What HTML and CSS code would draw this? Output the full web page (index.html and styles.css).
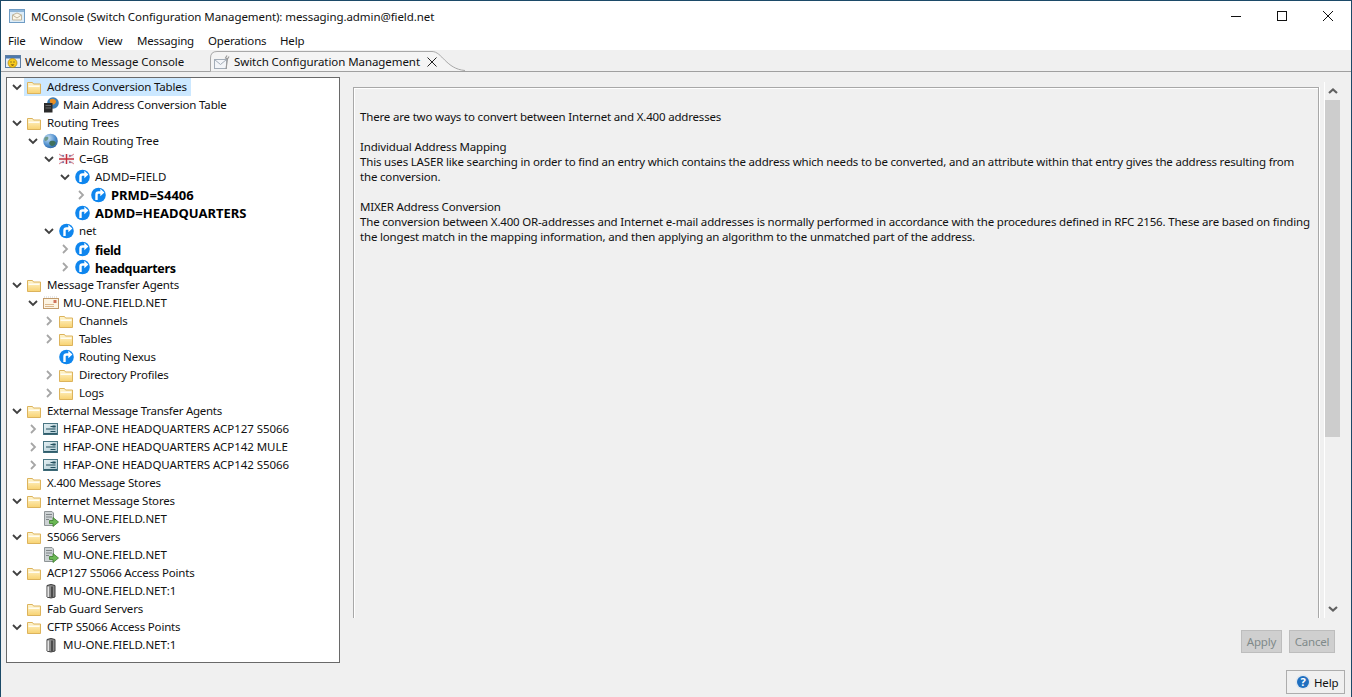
FILE: index.html
```html
<!DOCTYPE html>
<html lang="en">
<head>
<meta charset="utf-8">
<title>MConsole</title>
<link rel="stylesheet" href="styles.css">
</head>
<body>
<svg class="defs" width="0" height="0" aria-hidden="true">
  <defs>
    <linearGradient id="fg" x1="0" y1="0" x2="0" y2="1"><stop offset="0" stop-color="#fff6d2"/><stop offset="1" stop-color="#f8d270"/></linearGradient>
    <radialGradient id="gl" cx=".35" cy=".3" r=".8"><stop offset="0" stop-color="#c8e0f2"/><stop offset=".6" stop-color="#4f8fcf"/><stop offset="1" stop-color="#2a5f98"/></radialGradient>
    <linearGradient id="ex" x1="0" y1="0" x2="1" y2="1"><stop offset="0" stop-color="#e6f1f4"/><stop offset="1" stop-color="#a9c6cf"/></linearGradient>
    <symbol id="folder" viewBox="0 0 16 16">
      <path d="M.5 14.500V3.500h5l1 1.500h7v9.500z" fill="url(#fg)" stroke="#dcb35c"/>
      <path d="M1.500 6.500h11V8h-11z" fill="#fffdf2"/>
    </symbol>
    <symbol id="route" viewBox="0 0 16 16">
      <circle cx="7.500" cy="8" r="7.300" fill="#0f86ee"/>
      <path d="M5.500 13V7.500A2 2 0 0 1 7.500 5.500H10" fill="none" stroke="#fff" stroke-width="2.400"/>
      <path d="M9.300 1.800 13.400 5.500 9.300 9.200z" fill="#fff"/>
    </symbol>
    <symbol id="globe" viewBox="0 0 16 16">
      <circle cx="7.500" cy="8" r="7.300" fill="url(#gl)"/>
      <path d="M6.500 9c2-2 5-1 6 0s-1 4-3 4-4-2-3-4z" fill="#3f6f5c"/>
      <path d="M1.500 5c2-2 4-1 4 0S3.500 8 2.500 8 1 6 1.500 5z" fill="#6f9a8a"/>
    </symbol>
    <symbol id="flag" viewBox="0 0 16 12">
      <rect y="1" width="15" height="10" fill="#f1f1f6"/>
      <path d="M1 2h4v2.500zM14 2h-4v2.500zM1 10h4V7.500zM14 10h-4V7.500z" fill="#7484b8"/>
      <path d="M0 1 15 11M15 1 0 11" stroke="#e2838b"/>
      <path d="M7.500 1v10M0 6h15" stroke="#f6f6f6" stroke-width="3.500"/>
      <path d="M7.500 1v10M0 6h15" stroke="#c8303e" stroke-width="1.500"/>
    </symbol>
    <symbol id="mta" viewBox="0 0 16 14">
      <rect x=".5" y="2.500" width="15" height="10" fill="#fdf4e2" stroke="#c19a6b"/>
      <path d="M2 8.500h9M2 10.500h9" stroke="#dcb88f"/>
      <rect x="10.500" y="4" width="3" height="3" fill="#d0735a"/>
      <path d="M1 1h14" stroke="#cfcfcf" stroke-dasharray="1 1"/>
    </symbol>
    <symbol id="ext" viewBox="0 0 16 12">
      <rect x=".5" y=".5" width="14" height="11" fill="url(#ex)" stroke="#4a7683"/>
      <path d="M7.500 3.500h5M3 6h9.500M7.500 8.500h5" stroke="#24505f"/>
      <rect x="9.500" y="2.500" width="3" height="2" fill="#24505f"/>
      <rect x="1" y="10" width="13" height="1.500" fill="#2f5c6b"/>
    </symbol>
    <symbol id="store" viewBox="0 0 16 16">
      <path d="M1.500.5h7.500l1.500 1.500v12.500h-9z" fill="#cdd2d4" stroke="#8f9597"/>
      <path d="M3 3.500h6M3 6h6M3 8.500h3" stroke="#7f8587"/>
      <path d="M6.500 9.500h3.500V6.500l5.500 4.500-5.500 4.500V12.500H6.500z" fill="#6ab854" stroke="#3a7c2c" stroke-width=".8"/>
    </symbol>
    <symbol id="cyl" viewBox="0 0 12 16">
      <path d="M2 2.500Q6 .5 10 2.500V14Q6 16 2 14z" fill="#8a8a8a" stroke="#3e3e3e"/>
      <path d="M3.200 3.500V14" stroke="#e8e8e8" stroke-width="1.500"/>
      <path d="M7 3.500V14.500" stroke="#4c4c4c" stroke-width="2"/>
    </symbol>
    <symbol id="table" viewBox="0 0 16 16">
      <circle cx="10" cy="6" r="5.800" fill="#3c7fb8"/>
      <path d="M7 2.500c3-2 6 0 6 2s-3 4-4 3-3-3-2-5z" fill="#e88f24"/>
      <rect x="1" y="6" width="8.500" height="9.500" fill="#2b2b2b"/>
      <path d="M2.500 8.500h5.500M2.500 11h5.500" stroke="#6b6b6b"/>
    </symbol>
    <symbol id="down" viewBox="0 0 10 10"><path d="M1 3 5 7 9 3" fill="none" stroke="#404040" stroke-width="1.800"/></symbol>
    <symbol id="right" viewBox="0 0 10 10"><path d="M3 1 7 5 3 9" fill="none" stroke="#a6a6a6" stroke-width="1.800"/></symbol>
  </defs>
</svg>

<div class="window">
  <header class="titlebar">
    <svg class="app-icon" viewBox="0 0 16 16" width="16" height="16">
      <rect x=".5" y="1.500" width="15" height="13" fill="#dcecf8" stroke="#6f9cc4"/>
      <rect x="1" y="2" width="14" height="2" fill="#8fb6d8"/>
      <path d="M3.500 7 8 5l4.500 2v5h-9z" fill="#fbf6e8" stroke="#c0b59c"/>
      <path d="M3.500 7 8 10l4.500-3" fill="none" stroke="#c0b59c"/>
    </svg>
    <span class="title">MConsole (Switch Configuration Management): messaging.admin@field.net</span>
    <div class="controls">
      <svg class="ctl" viewBox="0 0 46 14" width="46" height="14"><path d="M18 7.500h10" stroke="#111"/></svg>
      <svg class="ctl" viewBox="0 0 46 14" width="46" height="14"><rect x="18.500" y="2.500" width="9" height="9" fill="none" stroke="#111"/></svg>
      <svg class="ctl" viewBox="0 0 46 14" width="46" height="14"><path d="M18 2l10 10M28 2 18 12" stroke="#111" fill="none"/></svg>
    </div>
  </header>

  <nav class="menubar">
    <span>File</span><span>Window</span><span>View</span><span>Messaging</span><span>Operations</span><span>Help</span>
  </nav>

  <div class="tabbar">
    <div class="tab tab-idle">
      <svg class="tab-icon" viewBox="0 0 16 14" width="16" height="14">
        <rect x=".5" y=".5" width="15" height="12" fill="#e6eff8" stroke="#5d7ea3"/>
        <rect x="1" y="1" width="14" height="2.500" fill="#4d79ad"/>
        <circle cx="7.500" cy="8" r="4.500" fill="#f8cc1e" stroke="#a97f10" stroke-width=".7"/>
        <path d="M5.500 7h1M8.500 7h1" stroke="#333"/>
        <path d="M5.500 9.500c1 1.500 3 1.500 4 0z" fill="#5a3a10"/>
      </svg>
      <span>Welcome to Message Console</span>
    </div>
    <div class="tab tab-active">
      <svg class="tab-shape" viewBox="0 0 256 22" width="256" height="22" preserveAspectRatio="none">
        <path d="M.5 21.500V8Q.5 1.500 7 1.500H222C232 1.500 236 19 255 20.500" fill="#f4f4f4" stroke="#a8a8a8"/>
      </svg>
      <svg class="tab-icon" viewBox="0 0 16 16" width="16" height="16">
        <rect x=".5" y="5.500" width="12" height="9" fill="#f3f5f8" stroke="#a3adb8"/>
        <path d="M.5 5.500 6.500 10.500 12.500 5.500" fill="none" stroke="#a3adb8"/>
        <path d="M13 1.500 11.500 4l2 1 1.500-2.500M13.500 5 12 15" fill="none" stroke="#9a9a9a" stroke-width="1.200"/>
      </svg>
      <span>Switch Configuration Management</span>
      <svg class="tab-close" viewBox="0 0 10 10" width="10" height="10"><path d="M.5.500l9 9M9.500.500l-9 9" stroke="#222" fill="none"/></svg>
    </div>
  </div>

  <main class="content">
    <section class="tree">
      <div class="row l0 selected"><svg class="chev"><use href="#down"/></svg><svg class="ico"><use href="#folder"/></svg><span class="lbl">Address Conversion Tables</span></div>
      <div class="row l1"><i class="nochev"></i><svg class="ico"><use href="#table"/></svg><span class="lbl">Main Address Conversion Table</span></div>
      <div class="row l0"><svg class="chev"><use href="#down"/></svg><svg class="ico"><use href="#folder"/></svg><span class="lbl">Routing Trees</span></div>
      <div class="row l1"><svg class="chev"><use href="#down"/></svg><svg class="ico"><use href="#globe"/></svg><span class="lbl">Main Routing Tree</span></div>
      <div class="row l2"><svg class="chev"><use href="#down"/></svg><svg class="ico"><use href="#flag"/></svg><span class="lbl caps">C=GB</span></div>
      <div class="row l3"><svg class="chev"><use href="#down"/></svg><svg class="ico"><use href="#route"/></svg><span class="lbl caps">ADMD=FIELD</span></div>
      <div class="row l4"><svg class="chev"><use href="#right"/></svg><svg class="ico"><use href="#route"/></svg><span class="strong strong-caps">PRMD=S4406</span></div>
      <div class="row l3"><i class="nochev"></i><svg class="ico"><use href="#route"/></svg><span class="strong strong-caps">ADMD=HEADQUARTERS</span></div>
      <div class="row l2"><svg class="chev"><use href="#down"/></svg><svg class="ico"><use href="#route"/></svg><span class="lbl">net</span></div>
      <div class="row l3"><svg class="chev"><use href="#right"/></svg><svg class="ico"><use href="#route"/></svg><span class="strong strong-low">field</span></div>
      <div class="row l3"><svg class="chev"><use href="#right"/></svg><svg class="ico"><use href="#route"/></svg><span class="strong strong-low">headquarters</span></div>
      <div class="row l0"><svg class="chev"><use href="#down"/></svg><svg class="ico"><use href="#folder"/></svg><span class="lbl">Message Transfer Agents</span></div>
      <div class="row l1"><svg class="chev"><use href="#down"/></svg><svg class="ico"><use href="#mta"/></svg><span class="lbl caps">MU-ONE.FIELD.NET</span></div>
      <div class="row l2"><svg class="chev"><use href="#right"/></svg><svg class="ico"><use href="#folder"/></svg><span class="lbl">Channels</span></div>
      <div class="row l2"><svg class="chev"><use href="#right"/></svg><svg class="ico"><use href="#folder"/></svg><span class="lbl">Tables</span></div>
      <div class="row l2"><i class="nochev"></i><svg class="ico"><use href="#route"/></svg><span class="lbl">Routing Nexus</span></div>
      <div class="row l2"><svg class="chev"><use href="#right"/></svg><svg class="ico"><use href="#folder"/></svg><span class="lbl">Directory Profiles</span></div>
      <div class="row l2"><svg class="chev"><use href="#right"/></svg><svg class="ico"><use href="#folder"/></svg><span class="lbl">Logs</span></div>
      <div class="row l0"><svg class="chev"><use href="#down"/></svg><svg class="ico"><use href="#folder"/></svg><span class="lbl tight">External Message Transfer Agents</span></div>
      <div class="row l1"><svg class="chev"><use href="#right"/></svg><svg class="ico"><use href="#ext"/></svg><span class="lbl caps">HFAP-ONE HEADQUARTERS ACP127 S5066</span></div>
      <div class="row l1"><svg class="chev"><use href="#right"/></svg><svg class="ico"><use href="#ext"/></svg><span class="lbl caps">HFAP-ONE HEADQUARTERS ACP142 MULE</span></div>
      <div class="row l1"><svg class="chev"><use href="#right"/></svg><svg class="ico"><use href="#ext"/></svg><span class="lbl caps">HFAP-ONE HEADQUARTERS ACP142 S5066</span></div>
      <div class="row l0"><i class="nochev"></i><svg class="ico"><use href="#folder"/></svg><span class="lbl">X.400 Message Stores</span></div>
      <div class="row l0"><svg class="chev"><use href="#down"/></svg><svg class="ico"><use href="#folder"/></svg><span class="lbl">Internet Message Stores</span></div>
      <div class="row l1"><i class="nochev"></i><svg class="ico"><use href="#store"/></svg><span class="lbl caps">MU-ONE.FIELD.NET</span></div>
      <div class="row l0"><svg class="chev"><use href="#down"/></svg><svg class="ico"><use href="#folder"/></svg><span class="lbl">S5066 Servers</span></div>
      <div class="row l1"><i class="nochev"></i><svg class="ico"><use href="#store"/></svg><span class="lbl caps">MU-ONE.FIELD.NET</span></div>
      <div class="row l0"><svg class="chev"><use href="#down"/></svg><svg class="ico"><use href="#folder"/></svg><span class="lbl">ACP127 S5066 Access Points</span></div>
      <div class="row l1"><i class="nochev"></i><svg class="ico"><use href="#cyl"/></svg><span class="lbl caps">MU-ONE.FIELD.NET:1</span></div>
      <div class="row l0"><i class="nochev"></i><svg class="ico"><use href="#folder"/></svg><span class="lbl">Fab Guard Servers</span></div>
      <div class="row l0"><svg class="chev"><use href="#down"/></svg><svg class="ico"><use href="#folder"/></svg><span class="lbl">CFTP S5066 Access Points</span></div>
      <div class="row l1"><i class="nochev"></i><svg class="ico"><use href="#cyl"/></svg><span class="lbl caps">MU-ONE.FIELD.NET:1</span></div>
    </section>

    <section class="right">
      <div class="pane-wrap">
        <article class="pane">
          <p>There are two ways to convert between Internet and X.400 addresses</p>
          <p>Individual Address Mapping<br>This uses LASER like searching in order to find an entry which contains the address which needs to be converted, and an attribute within that entry gives the address resulting from<br>the conversion.</p>
          <p>MIXER Address Conversion<br>The conversion between X.400 OR-addresses and Internet e-mail addresses is normally performed in accordance with the procedures defined in RFC 2156. These are based on finding<br>the longest match in the mapping information, and then applying an algorithm to the unmatched part of the address.</p>
        </article>
        <div class="scrollbar">
          <svg class="sb-arrow" viewBox="0 0 10 6" width="10" height="6"><path d="M1 5 5 1.500 9 5" fill="none" stroke="#606060" stroke-width="2.200"/></svg>
          <div class="track"><div class="thumb"></div></div>
          <svg class="sb-arrow" viewBox="0 0 10 6" width="10" height="6"><path d="M1 1 5 4.500 9 1" fill="none" stroke="#606060" stroke-width="2.200"/></svg>
        </div>
      </div>
      <div class="actions">
        <button class="btn btn-apply" disabled>Apply</button>
        <button class="btn btn-cancel" disabled>Cancel</button>
      </div>
    </section>
  </main>

  <footer class="footer">
    <button class="help">
      <svg viewBox="0 0 16 16" width="16" height="16">
        <circle cx="8" cy="8" r="7.500" fill="#dfe7ef"/>
        <circle cx="8" cy="8" r="6" fill="#1f6fc0"/>
        <text x="8" y="12" class="q">?</text>
      </svg>
      <span>Help</span>
    </button>
  </footer>
</div>
</body>
</html>
```
FILE: styles.css
```css
* { box-sizing: border-box; }
html, body { margin: 0; height: 100%; }
body {
  width: 1352px;
  height: 697px;
  overflow: hidden;
  background: #f0f0f0;
  color: #111;
  font-family: "Noto Sans", "Open Sans", sans-serif;
  font-size: 11.5px;
  letter-spacing: -0.18px;
}
.defs { position: absolute; }
.window {
  height: 697px;
  display: flex;
  flex-direction: column;
  border-top: 1px solid #1c4a68;
  border-left: 1px solid #1c4a68;
  border-right: 1px solid #1c4a68;
}
.titlebar {
  height: 30px;
  flex: none;
  display: flex;
  align-items: center;
  background: #fff;
  padding-left: 8px;
}
.app-icon { flex: none; }
.title { margin-left: 6px; flex: 1; letter-spacing: -0.08px; }
.controls { display: flex; }
.ctl { display: block; }
.menubar {
  height: 19px;
  flex: none;
  display: grid;
  grid-template-columns: 32px 58px 39px 71px 72px auto;
  align-items: center;
  background: #fff;
  padding-left: 7px;
}
.tabbar {
  height: 22px;
  flex: none;
  display: flex;
  border-bottom: 1px solid #a0a0a0;
}
.tab { display: flex; align-items: center; height: 21px; letter-spacing: -0.07px; }
.tab-idle { width: 209px; padding: 2px 0 0 4px; }
.tab-idle span { margin-left: 4px; }
.tab-active { position: relative; width: 256px; padding: 2px 0 0 4px; }
.tab-active span { margin-left: 4px; position: relative; }
.tab-active .tab-icon { position: relative; }
.tab-shape { position: absolute; left: 0; top: 0; }
.tab-close { position: relative; margin-left: 7px; }
.content {
  flex: 1;
  min-height: 0;
  display: flex;
  padding: 5px 11px 0 5px;
}
.tree {
  width: 334px;
  height: 586px;
  flex: none;
  background: #fff;
  border: 1px solid #696969;
}
.row {
  height: 18px;
  display: flex;
  align-items: center;
  white-space: nowrap;
}
.l0 { padding-left: 5px; }
.l1 { padding-left: 21px; }
.l2 { padding-left: 37px; }
.l3 { padding-left: 53px; }
.l4 { padding-left: 69px; }
.chev, .nochev { width: 10px; height: 10px; flex: none; display: block; margin-right: 5px; }
.ico { width: 16px; height: 16px; flex: none; margin-right: 4px; }
.lbl { margin-bottom: 2px; }
.tight { letter-spacing: -0.27px; }
.caps { letter-spacing: -0.05px; }
.selected { background: linear-gradient(to right, #fff 0, #fff 17px, #cce8ff 17px, #cce8ff 184px, #fff 184px); }
.strong { font-weight: 700; color: #000; }
.strong-caps { font-size: 13px; letter-spacing: 0; }
.strong-low { font-size: 12.5px; letter-spacing: -0.35px; margin-top: 2px; }
.right {
  flex: 1;
  display: flex;
  flex-direction: column;
  margin-left: 13px;
  min-width: 0;
}
.pane-wrap { display: flex; height: 531px; flex: none; }
.pane {
  width: 966px;
  height: 531px;
  margin-top: 10px;
  padding: 21px 0 0 6px;
  border-top: 1px solid #a8a8a8;
  border-left: 1px solid #a8a8a8;
  border-right: 1px solid #a8a8a8;
  box-shadow: inset 1px 1px 0 #fff, 1px 0 0 #fff;
  line-height: 15px;
  color: #111;
}
.pane p { margin: 0 0 15px; white-space: nowrap; }
.scrollbar {
  width: 15px;
  margin: 5px 0 0 6px;
  display: flex;
  flex-direction: column;
  align-items: center;
  height: 536px;
  box-shadow: -1px 0 0 #fff;
}
.sb-arrow { flex: none; margin: 6px 0; display: block; }
.track { flex: 1; width: 100%; }
.thumb { height: 337px; background: #cdcdcd; }
.actions {
  display: flex;
  gap: 7px;
  margin-top: 22px;
  margin-left: 888px;
}
.btn {
  height: 23px;
  padding: 0;
  background: #cfcfcf;
  border: 1px solid #bdbdbd;
  color: #7f8a8a;
  font: inherit;
  letter-spacing: inherit;
}
.btn-apply { width: 41px; }
.btn-cancel { width: 46px; }
.footer {
  height: 34px;
  flex: none;
  display: flex;
  justify-content: flex-end;
  padding: 7px 6px 3px 0;
}
.help {
  width: 59px;
  height: 24px;
  display: flex;
  align-items: center;
  gap: 3px;
  padding: 0 0 0 8px;
  background: #f0f0f0;
  border: 1px solid #adadad;
  color: #111;
  font: inherit;
  letter-spacing: inherit;
}
.q { fill: #fff; font-size: 11px; font-weight: 700; text-anchor: middle; }
```
